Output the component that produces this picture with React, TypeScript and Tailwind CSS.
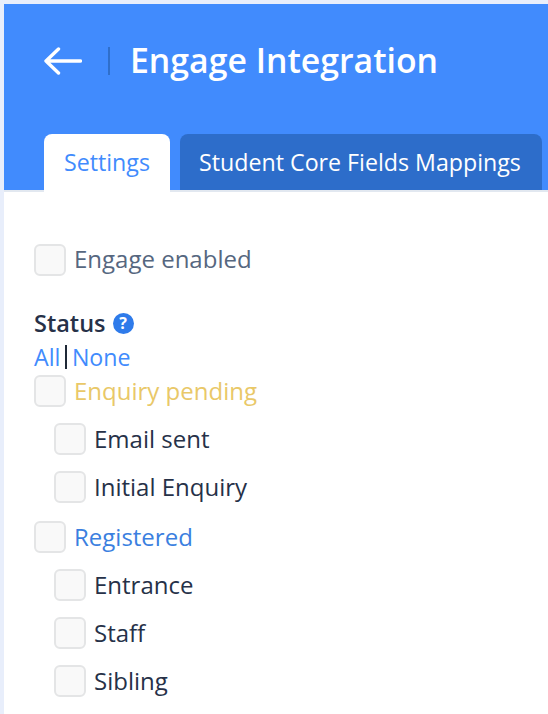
import React from 'react';

const font = { fontFamily: '"Open Sans", sans-serif' };

function Check({ label, className, indent, rowClass = 'h-[48px]', textClass = '' }: { label: string; className: string; indent?: boolean; rowClass?: string; textClass?: string }) {
  return (
    <label className={`flex items-center ${rowClass} ${indent ? 'pl-[20px]' : ''}`}>
      <span className="w-[32px] h-[32px] shrink-0 rounded-[6px] bg-[#f9f9f9] border-2 border-[#e4e5e6]" />
      <span className={`ml-[8px] text-[24px] ${className} ${textClass}`}>{label}</span>
    </label>
  );
}

export default function App() {
  return (
    <div className="w-[548px] h-[714px] overflow-hidden bg-[#e8eefb] pt-[4px] pl-[4px]" style={font}>
      <header className="bg-[#418bfd] h-[186px] flex flex-col justify-between">
        <div className="flex items-center pl-[40px] pt-[34px]">
          <svg width="38" height="28" viewBox="0 0 38 28" fill="none" stroke="#fff" strokeWidth="3.4" strokeLinecap="round" strokeLinejoin="round">
            <path d="M36.5 14H2M14.5 2 2 14l12.500 12" />
          </svg>
          <span className="ml-[26px] w-[2px] h-[28px] bg-[#2f6fcb]" />
          <h1 className="ml-[20px] text-[33.8px] leading-[44px] pb-[2px] font-semibold text-white">Engage Integration</h1>
        </div>
        <nav className="flex pl-[40px] gap-[10px]">
          <div className="w-[126px] h-[58px] -mb-[2px] rounded-t-[8px] bg-white text-[#418bfd] text-[23.200px] flex items-center justify-center pb-[2px]">Settings</div>
          <div className="w-[362px] h-[56px] rounded-t-[8px] bg-[#2d6dca] text-white text-[23.200px] flex items-center justify-center pr-[2px]">Student Core Fields Mappings</div>
        </nav>
      </header>
      <main className="bg-white border-t-2 border-[#e2e8f0] h-[530px] pl-[30px] pt-[44px]">
        <Check label="Engage enabled" className="text-[#56677f]" textClass="pb-[2px]" />
        <div className="mt-[24px] flex items-center gap-[7px]">
          <span className="text-[23.5px] leading-[30px] font-semibold text-[#263148]">Status</span>
          <span className="w-[21px] h-[21px] rounded-full bg-[#2f7bea] text-white text-[16px] font-bold leading-none flex items-center justify-center">?</span>
        </div>
        <div className="mt-[7px] h-[24px] text-[23.2px] leading-[24px] text-[#418bfd] flex items-center">
          <span>All</span>
          <span className="mx-[5px] w-[1.5px] h-[24px] bg-[#1f2937]" />
          <span>None</span>
        </div>
        <Check label="Enquiry pending" className="text-[#e9c868]" rowClass="h-[44px] mb-[2px]" />
        <Check label="Email sent" className="text-[#263148]" indent />
        <Check label="Initial Enquiry" className="text-[#263148]" indent />
        <Check label="Registered" className="text-[#3b7fe0]" rowClass="h-[48px] mt-[2px]" />
        <Check label="Entrance" className="text-[#263148]" indent />
        <Check label="Staff" className="text-[#263148]" indent />
        <Check label="Sibling" className="text-[#263148]" indent />
      </main>
    </div>
  );
}
